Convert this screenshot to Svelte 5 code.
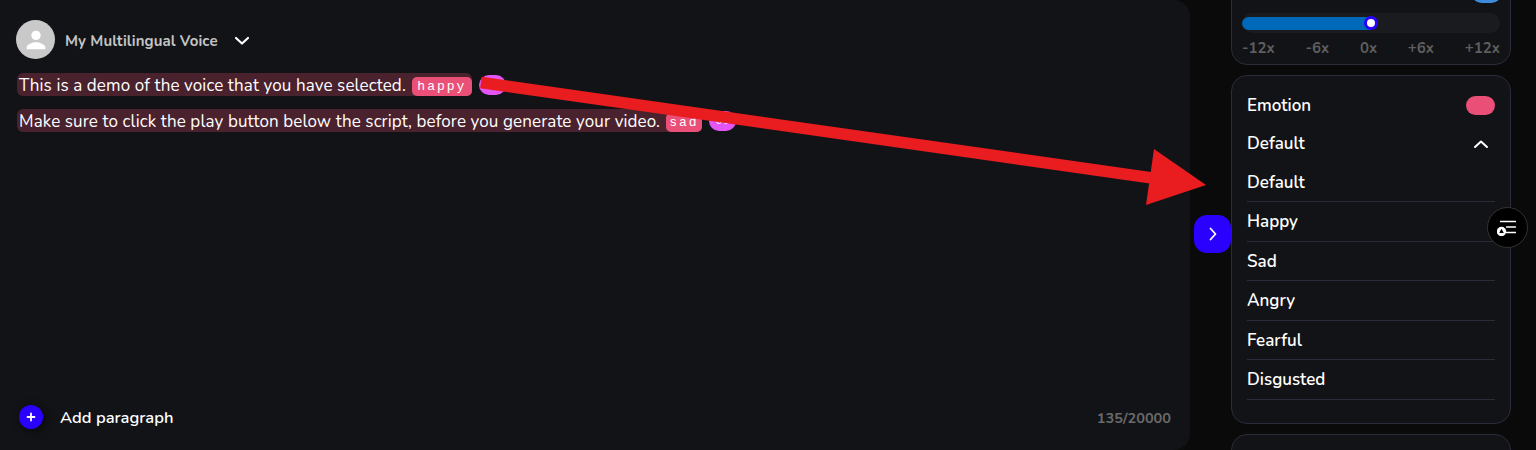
<script>
	const speedMarks = ['-12x', '-6x', '0x', '+6x', '+12x'];
	const emotions = ['Default', 'Happy', 'Sad', 'Angry', 'Fearful', 'Disgusted'];
	const paragraphs = [
		{ text: 'This is a demo of the voice that you have selected.', tag: 'happy', bubble: '' },
		{ text: 'Make sure to click the play button below the script, before you generate your video.', tag: 'sad', bubble: '00' }
	];
</script>

<div class="page">
	<main class="editor">
		<header class="voice">
			<span class="avatar">
				<svg viewBox="0 0 24 24" width="28" height="28">
					<circle cx="12" cy="8" r="4" fill="#fff" />
					<path d="M4 20v-1.500c0-2.800 5.200-4.500 8-4.500s8 1.700 8 4.500V20z" fill="#fff" />
				</svg>
			</span>
			<span class="voice-name">My Multilingual Voice</span>
			<svg class="chev" viewBox="0 0 16 10" width="16" height="10">
				<path d="M2 2l6 5.500L14 2" fill="none" stroke="#fff" stroke-width="2.200" stroke-linecap="round" stroke-linejoin="round" />
			</svg>
		</header>

		<div class="script">
			{#each paragraphs as p}
				<div class="line">
					<span class="sentence">
						<span class="words">{p.text}</span>
						<span class="tag" style="width: {p.tag.length * 12}px">{p.tag}</span>
					</span>
					<span class="bubble">{p.bubble}</span>
				</div>
			{/each}
		</div>

		<footer class="editor-foot">
			<button class="add">
				<span class="add-icon">
					<svg viewBox="0 0 10 10" width="10" height="10">
						<path d="M5 1.500v7M1.500 5h7" stroke="#fff" stroke-width="1.800" stroke-linecap="round" />
					</svg>
				</span>
				Add paragraph
			</button>
			<span class="count">135/20000</span>
		</footer>
	</main>

	<div class="gutter">
		<button class="collapse" aria-label="Collapse">
			<svg viewBox="0 0 10 16" width="10" height="16">
				<path d="M2.500 2.500L7.500 8l-5 5.500" fill="none" stroke="#fff" stroke-width="1.800" stroke-linecap="round" stroke-linejoin="round" />
			</svg>
		</button>
	</div>

	<aside class="side">
		<section class="card speed">
			<div class="toggle-row"><span class="toggle blue"></span></div>
			<div class="track">
				<div class="fill"><span class="thumb"></span></div>
			</div>
			<div class="marks">
				{#each speedMarks as m}<span>{m}</span>{/each}
			</div>
		</section>

		<section class="card emotion">
			<div class="row-head">
				<span>Emotion</span>
				<span class="toggle pink"></span>
			</div>
			<div class="row-select">
				<span>Default</span>
				<svg viewBox="0 0 16 10" width="16" height="10">
					<path d="M2 8l6-5.500L14 8" fill="none" stroke="#fff" stroke-width="2" stroke-linecap="round" stroke-linejoin="round" />
				</svg>
			</div>
			<ul>
				{#each emotions as e}<li>{e}</li>{/each}
			</ul>
		</section>

		<section class="card empty"></section>
	</aside>

	<button class="float" aria-label="Settings">
		<svg viewBox="0 0 22 16" width="22" height="16">
			<path d="M3.500 1.500h15M9.500 7h9M9.500 12.500h9" stroke="#fff" stroke-width="1.300" stroke-linecap="round" fill="none" />
			<circle cx="4.500" cy="11.500" r="4.700" fill="#fff" />
			<path d="M4.500 8.800l2.300 4.200h-4.600z" fill="#000" />
		</svg>
	</button>

	<svg class="arrow" viewBox="0 0 1536 450" width="1536" height="450">
		<line x1="481" y1="82.500" x2="1152" y2="178" stroke="#e91c1f" stroke-width="11.500" />
		<polygon points="1154,149 1206,185 1146,205" fill="#e91c1f" />
	</svg>
</div>

<style>
	:global(body) {
		margin: 0;
		background: #0a0a0a;
	}

	.page {
		position: relative;
		display: flex;
		width: 1536px;
		height: 450px;
		overflow: hidden;
		background: #0a0a0a;
		font-family: 'Nunito', 'Lato', 'Noto Sans', sans-serif;
		color: #fff;
	}

	.editor {
		width: 1190px;
		height: 450px;
		box-sizing: border-box;
		flex: none;
		display: flex;
		flex-direction: column;
		background: #121316;
		border-radius: 0 16px 16px 0;
		padding: 20px 19px 21px 16px;
	}

	.voice {
		display: flex;
		align-items: center;
		height: 39px;
	}

	.avatar {
		width: 39px;
		height: 39px;
		border-radius: 50%;
		background: #c9c9c9;
		display: flex;
		align-items: center;
		justify-content: center;
		margin-right: 10px;
	}

	.voice-name {
		font-size: 15px;
		font-weight: 700;
		letter-spacing: 0.1px;
		color: #c4c4c4;
		margin: 2px 16px 0 0;
	}

	.chev {
		margin-top: 2px;
	}

	.script {
		flex: 1;
		margin-top: 14px;
		display: flex;
		flex-direction: column;
		gap: 13px;
	}

	.line {
		display: flex;
		align-items: center;
		height: 23px;
	}

	.sentence {
		display: flex;
		align-items: center;
		height: 23px;
		margin-left: 1px;
		padding-left: 2px;
		background: #4a222d;
		border-radius: 6px;
	}

	.words {
		font-size: 17px;
		letter-spacing: 0.11px;
		margin: 1px 6px 0 0;
		white-space: nowrap;
	}

	.tag {
		font-family: 'Liberation Mono', monospace;
		font-size: 13px;
		letter-spacing: 2px;
		height: 19px;
		line-height: 19px;
		margin-top: 4px;
		text-align: center;
		background: #ea5077;
		border-radius: 5px;
	}

	.bubble {
		width: 27px;
		height: 20px;
		margin-left: 7px;
		border-radius: 10px;
		background: #e455f5;
		font-family: 'Liberation Mono', monospace;
		font-size: 12px;
		line-height: 20px;
		text-align: center;
	}

	.editor-foot {
		display: flex;
		align-items: center;
		justify-content: space-between;
	}

	.add {
		display: flex;
		align-items: center;
		gap: 17px;
		border: 0;
		padding: 0;
		margin-left: 3px;
		background: none;
		color: #fff;
		font: inherit;
		font-size: 16.500px;
		font-weight: 600;
	}

	.add-icon {
		width: 24px;
		height: 24px;
		border-radius: 50%;
		background: #2a00ff;
		box-shadow: 2px 2px 8px rgba(0, 0, 0, 0.6);
		display: flex;
		align-items: center;
		justify-content: center;
	}

	.count {
		font-size: 14.500px;
		font-weight: 700;
		color: #6a6a6a;
		margin-top: 2px;
	}

	.gutter {
		width: 41px;
		flex: none;
		display: flex;
		align-items: flex-start;
	}

	.collapse {
		width: 38px;
		height: 38px;
		margin: 215px 0 0 4px;
		border: 0;
		padding: 0;
		border-radius: 13px;
		background: #2a00ff;
		display: flex;
		align-items: center;
		justify-content: center;
		position: relative;
	}

	.side {
		width: 280px;
		flex: none;
		display: flex;
		flex-direction: column;
		gap: 10px;
		margin-top: -40px;
	}

	.card {
		flex: none;
		box-sizing: border-box;
		background: #121316;
		border: 1px solid #2c2b3a;
		border-radius: 16px;
	}

	.speed {
		height: 105px;
		padding: 30px 10px 0;
	}

	.toggle-row {
		display: flex;
		justify-content: flex-end;
		height: 22px;
		margin: 0 -1px 0 0;
	}

	.toggle {
		width: 29px;
		height: 19px;
		border-radius: 10px;
	}

	.toggle.blue {
		margin-top: -7px;
		background: #3d8bdc;
	}

	.toggle.pink {
		background: #ea5077;
	}

	.track {
		height: 20px;
		border-radius: 10px;
		background: #1a1b1f;
		display: flex;
		align-items: center;
	}

	.fill {
		position: relative;
		width: 129px;
		height: 13px;
		border-radius: 7px 0 0 7px;
		background: #0068b8;
	}

	.thumb {
		position: absolute;
		right: -7px;
		top: -1px;
		width: 8px;
		height: 8px;
		border: 3px solid #2a00ff;
		border-radius: 50%;
		background: #fff;
	}

	.marks {
		display: flex;
		justify-content: space-between;
		margin-top: 5px;
		font-size: 15px;
		font-weight: 700;
		color: #5e5e5e;
	}

	.emotion {
		height: 349px;
		padding: 0 15px;
		font-size: 17px;
		font-weight: 600;
	}

	.row-head,
	.row-select {
		display: flex;
		align-items: center;
		justify-content: space-between;
		height: 39px;
	}

	.row-head {
		margin-top: 10px;
	}

	.row-select {
		height: 37.500px;
	}

	.row-select svg {
		margin-right: 6px;
	}

	ul {
		list-style: none;
		margin: 0;
		padding: 0;
	}

	li {
		height: 39.500px;
		line-height: 39.500px;
		box-sizing: border-box;
		border-bottom: 1px solid #2c2b3a;
	}

	.empty {
		height: 60px;
	}

	.float {
		position: absolute;
		left: 1487px;
		top: 207px;
		width: 41px;
		height: 41px;
		border: 1px solid #333;
		border-radius: 50%;
		background: #000;
		padding: 0;
		display: flex;
		align-items: center;
		justify-content: center;
	}

	.arrow {
		position: absolute;
		left: 0;
		top: 0;
		pointer-events: none;
	}
</style>
